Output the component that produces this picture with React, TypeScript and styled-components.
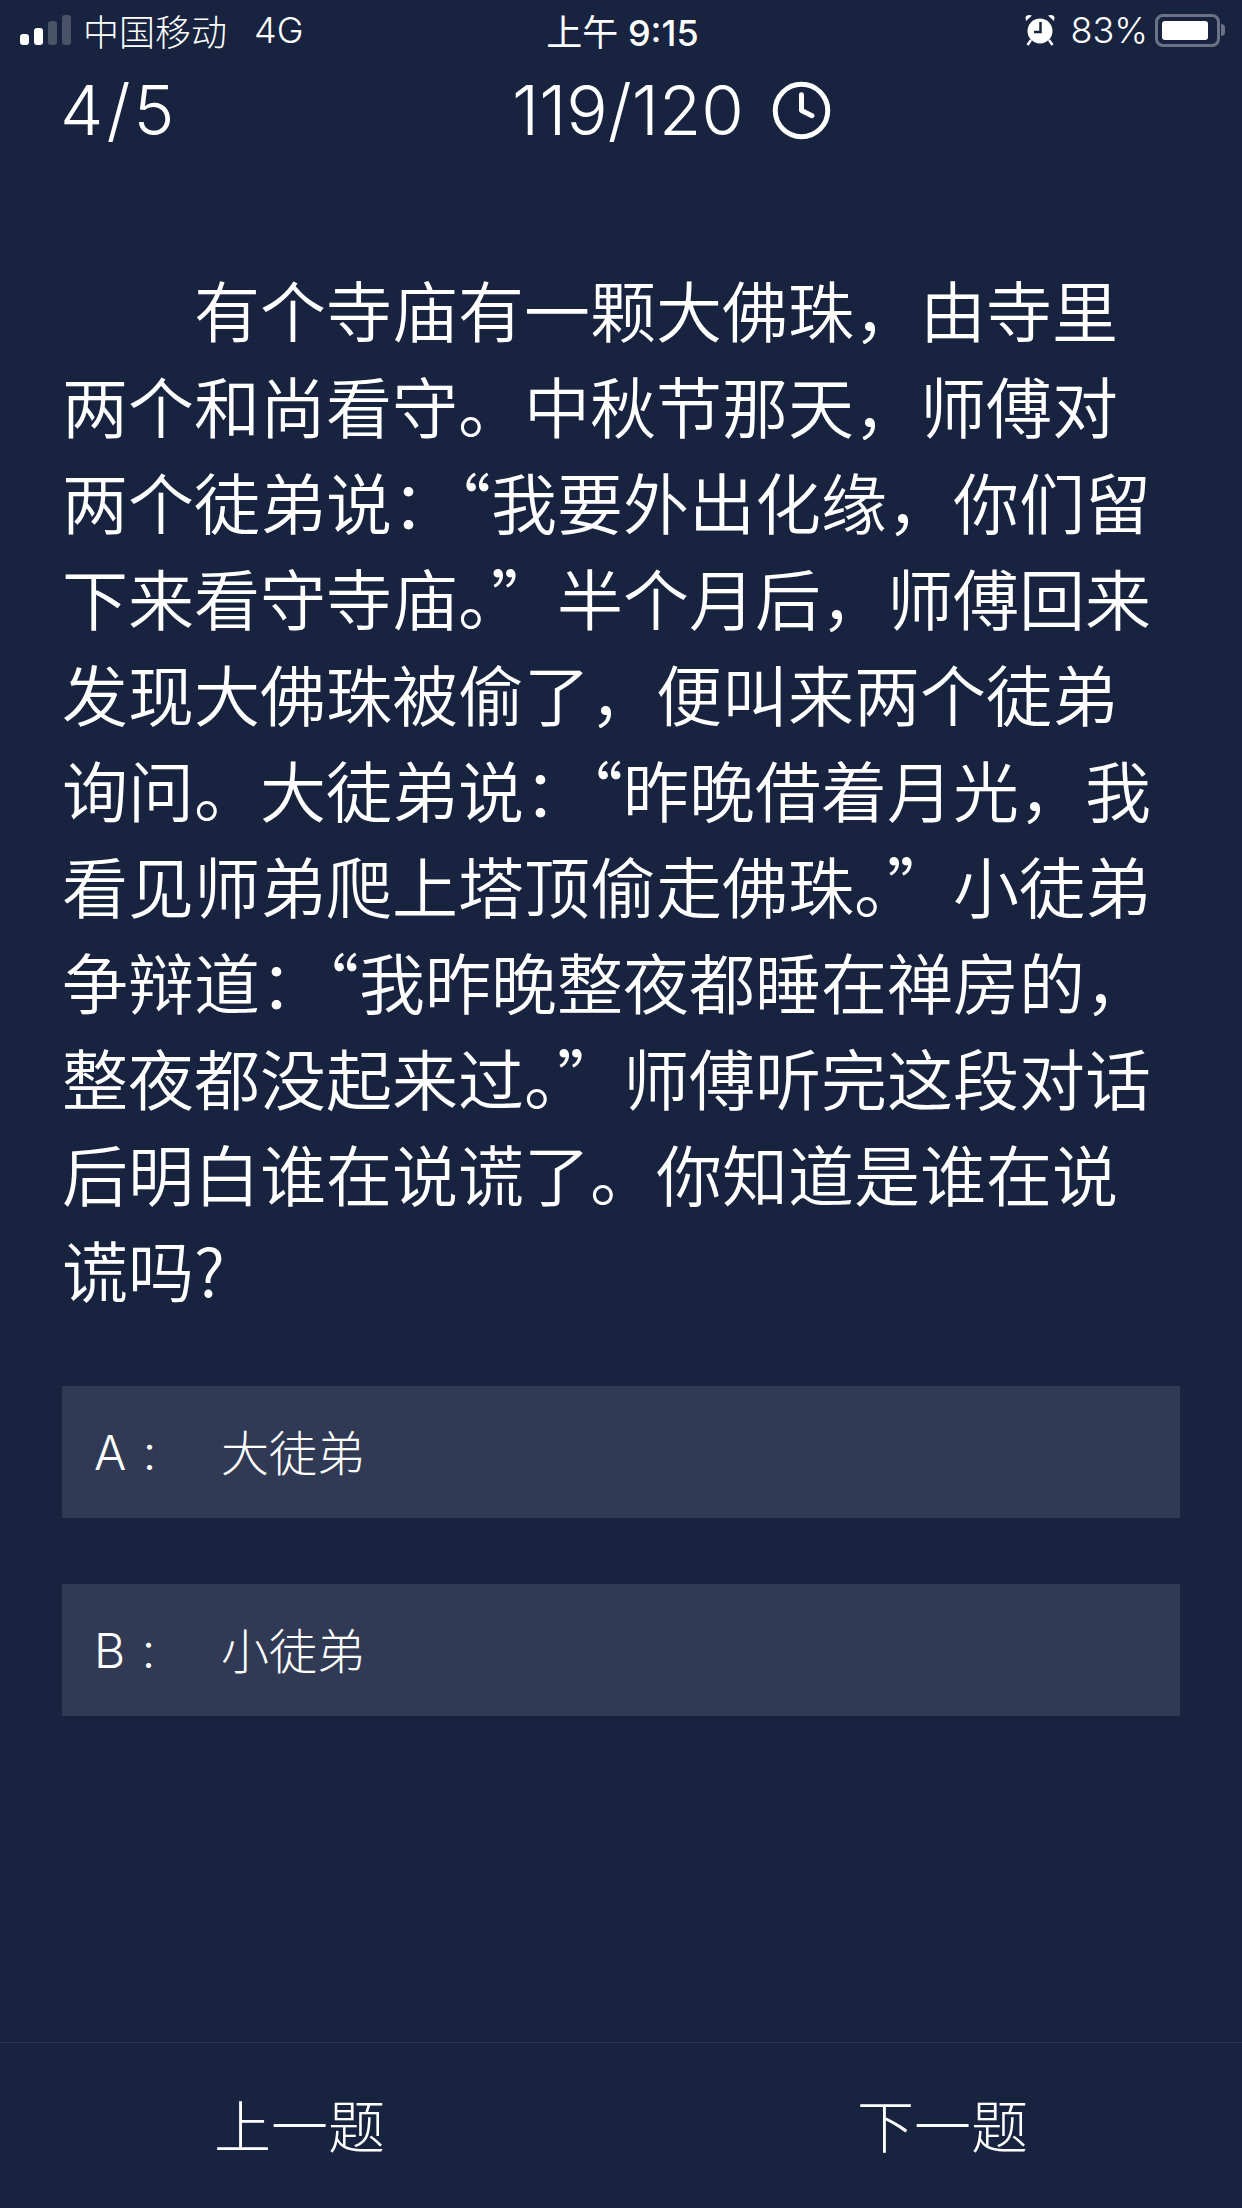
import React from "react";
import styled, { createGlobalStyle } from "styled-components";
import { Clock } from "lucide-react";

const Global = createGlobalStyle`
  html, body { margin: 0; padding: 0; background: #18233f; }
  * { box-sizing: border-box; }
`;

const latin = `Inter, "Noto Sans CJK SC", sans-serif`;
const cjk = `"Noto Sans CJK SC", sans-serif`;

const Page = styled.div`
  width: 1242px;
  height: 2208px;
  background: #18233f;
  color: #fff;
  display: flex;
  flex-direction: column;
  font-family: ${cjk};
  overflow: hidden;
`;

const StatusBar = styled.div`
  height: 60px;
  display: grid;
  grid-template-columns: 1fr auto 1fr;
  align-items: center;
  padding: 0 17px 0 20px;
  font-size: 35px;
  font-weight: 300;
  font-family: ${latin};
`;
const StatusLeft = styled.div`
  display: flex;
  align-items: center;
`;
const Signal = styled.div`
  display: flex;
  align-items: flex-end;
  gap: 5px;
  height: 30px;
  margin-right: 12px;
`;
const Bar = styled.i<{ $h: number; $on?: boolean }>`
  display: block;
  width: 9px;
  height: ${(p) => p.$h}px;
  border-radius: 3px;
  background: ${(p) => (p.$on ? "#fff" : "#4a5268")};
`;
const Carrier = styled.span`
  font-family: ${cjk};
  font-size: 36px;
  font-weight: 300;
  margin-right: 27px;
`;
const Network = styled.span`
  font-size: 36px;
`;
const Time = styled.div`
  font-size: 36px;
  font-weight: 500;
  span { font-family: ${cjk}; font-weight: 400; }
`;
const StatusRight = styled.div`
  display: flex;
  align-items: center;
  justify-content: flex-end;
`;
const Percent = styled.span`
  margin: 0 7px 0 14px;
  font-size: 36px;
`;
const Battery = styled.div`
  width: 65px;
  height: 33px;
  border: 3px solid #6b7286;
  border-radius: 8px;
  padding: 4px;
  display: flex;
`;
const BatteryFill = styled.div`
  width: 46px;
  background: #fff;
  border-radius: 3px;
`;
const BatteryTip = styled.div`
  width: 4px;
  height: 12px;
  margin-left: 1px;
  background: #6b7286;
  border-radius: 0 4px 4px 0;
`;

const Header = styled.div`
  display: grid;
  grid-template-columns: 452px auto;
  align-items: center;
  height: 100px;
  padding-left: 60px;
  font-family: ${latin};
  font-size: 69px;
  font-weight: 300;
`;
const Counter = styled.div`
  letter-spacing: 3px;
`;
const Timer = styled.div`
  display: flex;
  align-items: center;
  gap: 26px;
`;

const Question = styled.div`
  margin-top: 100px;
  padding-left: 62px;
  font-size: 66px;
  line-height: 96px;
  font-weight: 350;
  font-family: ${cjk};
`;
const Line = styled.div<{ $indent?: boolean }>`
  white-space: nowrap;
  padding-left: ${(p) => (p.$indent ? "132px" : "0")};
`;

const Options = styled.div`
  margin-top: 70px;
  padding: 0 62px;
  display: flex;
  flex-direction: column;
  gap: 66px;
`;
const Option = styled.div`
  height: 132px;
  background: #303a54;
  display: flex;
  align-items: center;
  padding: 0 0 4px 32px;
  font-size: 48px;
  font-weight: 300;
`;
const OptionKey = styled.span`
  width: 127px;
  margin-top: 4px;
  font-family: ${latin};
  font-feature-settings: "calt" 0;
  word-spacing: 3px;
`;

const Footer = styled.div`
  margin-top: auto;
  height: 166px;
  border-top: 1px solid #2a3550;
  display: flex;
  align-items: center;
  justify-content: space-between;
  padding: 0 214px 6px 214px;
  font-size: 57px;
  font-weight: 300;
`;

const lines = [
  "有个寺庙有一颗大佛珠，由寺里",
  "两个和尚看守。中秋节那天，师傅对",
  "两个徒弟说：“我要外出化缘，你们留",
  "下来看守寺庙。”半个月后，师傅回来",
  "发现大佛珠被偷了，便叫来两个徒弟",
  "询问。大徒弟说：“昨晚借着月光，我",
  "看见师弟爬上塔顶偷走佛珠。”小徒弟",
  "争辩道：“我昨晚整夜都睡在禅房的，",
  "整夜都没起来过。”师傅听完这段对话",
  "后明白谁在说谎了。你知道是谁在说",
  "谎吗?",
];

const Alarm = () => (
  <svg width="32" height="34" viewBox="0 0 32 34">
    <circle cx="16" cy="18" r="12.5" fill="#fff" />
    <path d="M2 8 L8 2.5 Q3 1 1.5 4 Z M30 8 L24 2.5 Q29 1 30.5 4 Z" fill="#fff" />
    <path d="M7 27 L3.5 32 M25 27 L28.5 32" stroke="#fff" strokeWidth="2.5" />
    <path d="M16.5 9 V19 H10" fill="none" stroke="#18233f" strokeWidth="2.5" />
  </svg>
);

export default function App() {
  return (
    <Page>
      <Global />
      <StatusBar>
        <StatusLeft>
          <Signal>
            <Bar $h={11} $on />
            <Bar $h={17} $on />
            <Bar $h={24} />
            <Bar $h={30} />
          </Signal>
          <Carrier>中国移动</Carrier>
          <Network>4G</Network>
        </StatusLeft>
        <Time>
          <span>上午</span> 9:15
        </Time>
        <StatusRight>
          <Alarm />
          <Percent>83%</Percent>
          <Battery>
            <BatteryFill />
          </Battery>
          <BatteryTip />
        </StatusRight>
      </StatusBar>
      <Header>
        <Counter>4/5</Counter>
        <Timer>
          119/120
          <Clock size={63} strokeWidth={1.9} color="#fff" />
        </Timer>
      </Header>
      <Question>
        {lines.map((l, i) => (
          <Line key={i} $indent={i === 0}>
            {l}
          </Line>
        ))}
      </Question>
      <Options>
        <Option>
          <OptionKey>A :</OptionKey>
          大徒弟
        </Option>
        <Option>
          <OptionKey>B :</OptionKey>
          小徒弟
        </Option>
      </Options>
      <Footer>
        <span>上一题</span>
        <span>下一题</span>
      </Footer>
    </Page>
  );
}
